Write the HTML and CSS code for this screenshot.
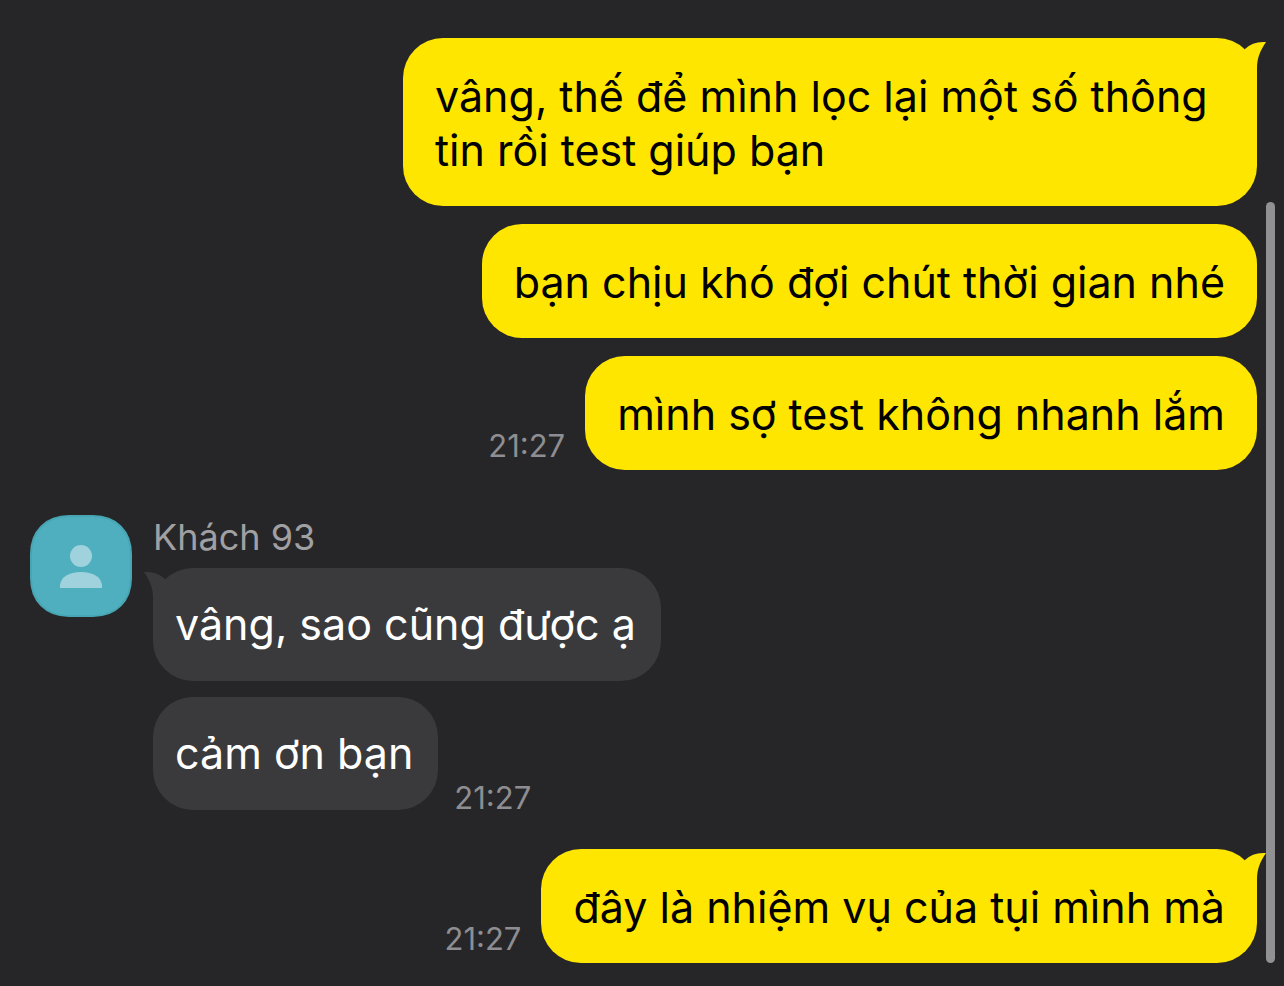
FILE: index.html
```html
<!DOCTYPE html>
<html lang="vi">
<head>
<meta charset="utf-8">
<meta name="viewport" content="width=device-width, initial-scale=1">
<title>Khách 93</title>
<link rel="stylesheet" href="styles.css">
</head>
<body>
<main class="chat">
  <section class="group sent">
    <div class="row">
      <p class="bubble wide">vâng, thế để mình lọc lại một số thông tin rồi test giúp bạn
        <svg class="tail" viewBox="0 0 24 40" aria-hidden="true"><path d="M3 8Q11 0 24 1C18 10 15 17 15 27V40H3Z"/></svg>
      </p>
    </div>
    <div class="row"><p class="bubble">bạn chịu khó đợi chút thời gian nhé</p></div>
    <div class="row"><time class="time">21:27</time><p class="bubble">mình sợ test không nhanh lắm</p></div>
  </section>
  <section class="group received">
    <svg class="avatar" viewBox="0 0 102 102" role="img" aria-label="Khách 93">
      <path class="avatar-bg" d="M39 1H63C86 1 101 16 101 39V63C101 86 86 101 63 101H39C16 101 1 86 1 63V39C1 16 16 1 39 1Z"/>
      <circle class="avatar-person" cx="51" cy="41" r="11"/>
      <path class="avatar-person" d="M30 73V70C31 62 39 57 51 57S71 62 72 70V73Z"/>
    </svg>
    <div class="thread">
      <h2 class="name">Khách 93</h2>
      <div class="row">
        <p class="bubble">vâng, sao cũng được ạ
          <svg class="tail" viewBox="0 0 24 40" aria-hidden="true"><path d="M21 8Q13 0 0 1C6 10 9 17 9 27V40H21Z"/></svg>
        </p>
      </div>
      <div class="row"><p class="bubble">cảm ơn bạn</p><time class="time">21:27</time></div>
    </div>
  </section>
  <section class="group sent">
    <div class="row">
      <time class="time">21:27</time>
      <p class="bubble">đây là nhiệm vụ của tụi mình mà
        <svg class="tail" viewBox="0 0 24 40" aria-hidden="true"><path d="M3 8Q11 0 24 1C18 10 15 17 15 27V40H3Z"/></svg>
      </p>
    </div>
  </section>
  <div class="scrollbar"></div>
</main>
</body>
</html>
```
FILE: styles.css
```css
* { box-sizing: border-box; }
body { margin: 0; background: #262628; font-family: Inter, "Noto Sans", sans-serif; }
.chat { position: relative; min-height: 100vh; padding: 38px 27px 23px 30px; display: flex; flex-direction: column; }
.group { display: flex; }
.sent { flex-direction: column; gap: 18px; }
.row { display: flex; align-items: flex-end; }
.sent .row { justify-content: flex-end; gap: 20px; }
.bubble { position: relative; margin: 0; border-radius: 40px; font-size: 43px; }
.sent .bubble { padding: 31px 32px 29px; background: #ffe600; color: #000; line-height: 54px; }
.sent .wide { max-width: 854px; }
.tail { position: absolute; top: 3px; width: 24px; height: 40px; }
.sent .tail { right: -9px; fill: #ffe600; }
.time { padding-bottom: 6px; color: #8e8e92; font-size: 31px; line-height: 36px; }
.received { margin: 45px 0 39px; gap: 21px; align-items: flex-start; }
.avatar { width: 102px; height: 102px; flex: none; }
.avatar-bg { fill: #4fafbe; stroke: #48a5b3; stroke-width: 2; }
.avatar-person { fill: #9fd2dc; }
.thread { display: flex; flex-direction: column; gap: 16px; }
.name { margin: 0 0 -7px; color: #a0a0a3; font-size: 36px; line-height: 44px; font-weight: 400; }
.received .bubble { background: #3a3a3c; color: #fff; padding: 30px 25px 30px 22px; line-height: 53px; }
.received .row { gap: 16px; }
.received .tail { left: -9px; fill: #3a3a3c; }
.received .time { padding-bottom: 0; margin-bottom: -6px; }
.scrollbar { position: absolute; right: 9px; top: 202px; bottom: 23px; width: 9px; border-radius: 5px; background: #919193; }
```
